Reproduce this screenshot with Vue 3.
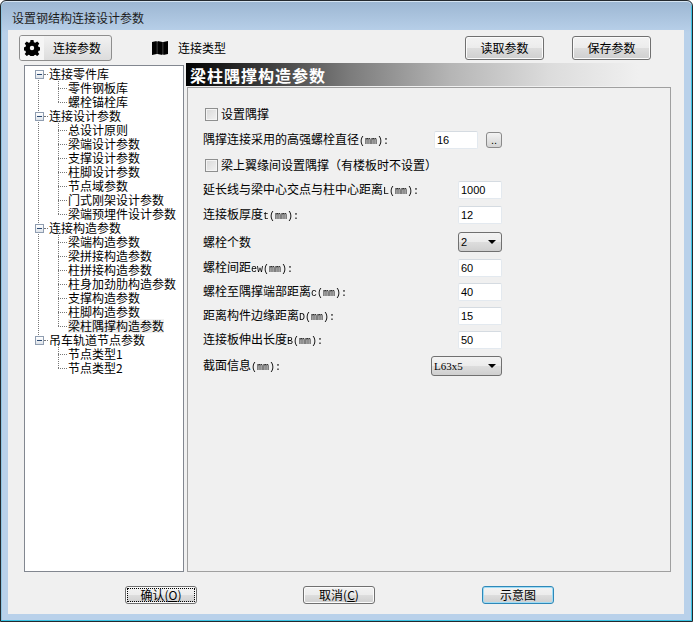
<script setup>
const tree = [
  { label: '连接零件库', items: ['零件钢板库', '螺栓锚栓库'] },
  { label: '连接设计参数', items: ['总设计原则', '梁端设计参数', '支撑设计参数', '柱脚设计参数', '节点域参数', '门式刚架设计参数', '梁端预埋件设计参数'] },
  { label: '连接构造参数', items: ['梁端构造参数', '梁拼接构造参数', '柱拼接构造参数', '柱身加劲肋构造参数', '支撑构造参数', '柱脚构造参数', '梁柱隅撑构造参数'] },
  { label: '吊车轨道节点参数', items: ['节点类型1', '节点类型2'] }
]
const selected = '梁柱隅撑构造参数'

const lowerRows = [
  { label: '连接板厚度', unit: 't(mm):', value: '12', h: 24 },
  { label: '螺栓个数', unit: '', select: '2', h: 30 },
  { label: '螺栓间距', unit: 'ew(mm):', value: '60', h: 22 },
  { label: '螺栓至隅撑端部距离', unit: 'c(mm):', value: '40', h: 26 },
  { label: '距离构件边缘距离', unit: 'D(mm):', value: '15', h: 22 },
  { label: '连接板伸出长度', unit: 'B(mm):', value: '50', h: 26 }
]
</script>

<template>
  <div class="window">
    <div class="titlebar">设置钢结构连接设计参数</div>
    <div class="client">
      <div class="toolbar">
        <div class="tool tool-active">
          <span class="tool-icon">
            <svg width="16" height="16" viewBox="0 0 16 16"><path fill="#000" fill-rule="evenodd" d="M6.500 0h3l.4 2.200 1.500.6 1.800-1.300 2.100 2.100-1.300 1.800.6 1.500 2.200.4v3l-2.200.4-.6 1.500 1.300 1.800-2.100 2.100-1.800-1.300-1.500.6-.4 2.200h-3l-.4-2.200-1.500-.6-1.800 1.300-2.100-2.100 1.300-1.800-.6-1.500-2.200-.4v-3l2.200-.4.6-1.500-1.300-1.800 2.100-2.100 1.800 1.300 1.500-.6zM8 5.800a2.200 2.200 0 1 0 0 4.400 2.200 2.200 0 0 0 0-4.400z"/></svg>
          </span>
          <span>连接参数</span>
        </div>
        <div class="tool tool-plain">
          <span class="tool-icon">
            <svg width="16" height="14" viewBox="0 0 16 14"><path fill="#555" d="M4 1h8v12H4z"/><path fill="#000" d="M0 1 4.700 0v13L0 14zM5.500 0l5 1v13l-5-1zM11.300 1 16 0v13l-4.700 1z"/></svg>
          </span>
          <span>连接类型</span>
        </div>
        <div class="tool-spacer"></div>
        <button class="btn btn-top">读取参数</button>
        <button class="btn btn-top btn-last">保存参数</button>
      </div>

      <div class="main">
        <div class="tree">
          <div v-for="group in tree" :key="group.label" class="group">
            <div class="root-row">
              <span class="expander"></span>
              <span class="root-dash"></span>
              <span>{{ group.label }}</span>
            </div>
            <div class="children">
              <div v-for="item in group.items" :key="item" class="child-row">
                <span class="child-dash"></span>
                <span :class="{ selected: item === selected }" class="child-text">{{ item }}</span>
              </div>
            </div>
          </div>
        </div>

        <div class="panel">
          <div class="heading">梁柱隅撑构造参数</div>
          <div class="form">
            <label class="row check-row h-set">
              <span class="check"></span><span>设置隅撑</span>
            </label>
            <div class="row h-dia">
              <span class="label">隅撑连接采用的高强螺栓直径<span class="unit">(mm):</span></span>
              <span class="input input-dia">16</span>
              <span class="browse">..</span>
            </div>
            <label class="row check-row h-flange">
              <span class="check"></span><span>梁上翼缘间设置隅撑（有楼板时不设置）</span>
            </label>
            <div class="row h-ext">
              <span class="label">延长线与梁中心交点与柱中心距离<span class="unit">L(mm):</span></span>
              <span class="input">1000</span>
            </div>
            <div v-for="r in lowerRows" :key="r.label" class="row" :style="{ height: r.h + 'px' }">
              <span class="label">{{ r.label }}<span class="unit">{{ r.unit }}</span></span>
              <span v-if="r.select" class="select">{{ r.select }}<i class="arrow"></i></span>
              <span v-else class="input">{{ r.value }}</span>
            </div>
            <div class="row h-sec">
              <span class="label">截面信息<span class="unit">(mm):</span></span>
              <span class="select select-wide">L63x5<i class="arrow"></i></span>
            </div>
          </div>
        </div>
      </div>

      <div class="footer">
        <button class="btn btn-foot btn-ok"><span class="focus">确认(<u>O</u>)</span></button>
        <button class="btn btn-foot btn-cancel">取消(<u>C</u>)</button>
        <button class="btn btn-foot btn-default">示意图</button>
      </div>
    </div>
  </div>
</template>

<style scoped>
.window {
  width: 693px;
  height: 622px;
  box-sizing: border-box;
  display: flex;
  flex-direction: column;
  border: 1px solid #24292e;
  border-radius: 6px 6px 0 0;
  background: linear-gradient(180deg, #9cb6d2 0, #b9d1ea 32px);
  box-shadow: inset 0 1px 0 #d5e4f2, inset -1px -1px 0 #3cc3e3, inset 1px 0 0 #8fc4e0;
  padding: 0 8px 7px 7px;
  font-family: "Noto Sans CJK SC", "Liberation Sans", sans-serif;
  font-size: 12px;
  line-height: 14px;
  color: #000;
  overflow: hidden;
}
.titlebar {
  height: 29px;
  flex: none;
  display: flex;
  align-items: center;
  padding: 4px 4px 0;
  box-sizing: border-box;
  color: #1c1c1c;
}
.client {
  flex: 1;
  display: flex;
  flex-direction: column;
  background: #f0f0f0;
  min-height: 0;
}
.toolbar {
  height: 35px;
  flex: none;
  display: flex;
  align-items: flex-start;
  padding: 5px 0 0 11px;
  box-sizing: border-box;
}
.tool {
  display: flex;
  align-items: center;
  height: 26px;
  box-sizing: border-box;
}
.tool-active {
  width: 93px;
  border: 1px solid #8e8e8e;
  border-radius: 3px;
  background: linear-gradient(180deg, #f2f2f2, #dcdcdc);
}
.tool-active .tool-icon {
  width: 24px;
  margin-right: 9px;
  align-self: stretch;
  background: #f5f5f5;
  border-radius: 2px 0 0 2px;
}
.tool-plain {
  margin-left: 38px;
}
.tool-plain .tool-icon {
  width: 22px;
  margin-right: 6px;
  justify-content: flex-start;
}
.tool-plain svg { margin-left: 2px; }
.tool-icon {
  display: flex;
  align-items: center;
  justify-content: center;
}
.tool-spacer { flex: 1; }
.btn {
  font: inherit;
  color: #000;
  box-sizing: border-box;
  border: 1px solid #707070;
  border-radius: 3px;
  background: linear-gradient(180deg, #f3f3f3 0, #ececec 48%, #dddddd 52%, #cfcfcf 100%);
  box-shadow: inset 0 0 0 1px #fbfbfb;
  padding: 0;
  display: flex;
  align-items: center;
  justify-content: center;
}
.btn-top {
  width: 79px;
  height: 24px;
  margin: 1px 0 0 28px;
}
.btn-top:first-of-type { margin-left: 0; }
.btn-last { margin-right: 33px; }
.main {
  flex: 1;
  display: flex;
  min-height: 0;
  padding: 0 13px 0 16px;
  gap: 3px;
}
.tree {
  width: 160px;
  height: 507px;
  box-sizing: border-box;
  flex: none;
  background: #fff;
  border: 1px solid #828790;
  padding: 1px 0 0 10px;
  overflow: hidden;
}
.group { position: relative; }
.group:not(:last-child)::before {
  content: "";
  position: absolute;
  left: 3px;
  top: 10px;
  bottom: -4px;
  border-left: 1px dotted #777;
}
.root-row {
  height: 14px;
  display: flex;
  align-items: center;
  white-space: nowrap;
}
.expander {
  width: 9px;
  height: 9px;
  box-sizing: border-box;
  flex: none;
  border: 1px solid #8f9db0;
  background: linear-gradient(180deg, #fff, #dfe4ea);
  position: relative;
  z-index: 1;
}
.expander::after {
  content: "";
  position: absolute;
  left: 1px;
  top: 3px;
  width: 5px;
  height: 1px;
  background: #2b4a73;
}
.root-dash {
  width: 4px;
  margin: 0 1px 0 0;
  flex: none;
  border-top: 1px dotted #777;
}
.children { position: relative; padding-left: 23px; }
.children::before {
  content: "";
  position: absolute;
  left: 23px;
  top: -4px;
  bottom: 7px;
  border-left: 1px dotted #777;
}
.child-row {
  height: 14px;
  display: flex;
  align-items: center;
  white-space: nowrap;
}
.child-dash {
  width: 9px;
  flex: none;
  border-top: 1px dotted #777;
  margin-right: 1px;
}
.child-text { line-height: 14px; }
.selected { background: #f0f0f0; }
.panel {
  flex: 1;
  min-width: 0;
  display: flex;
  flex-direction: column;
  margin-top: -2px;
}
.heading {
  height: 23px;
  flex: none;
  margin: 0 -13px 0 -1px;
  background: linear-gradient(90deg, #000 0, #7c7c7c 33%, #b5b5b5 53%, #dcdcdc 73%, #f0f0f0 91%);
  color: #fff;
  font-size: 16px;
  font-weight: 700;
  line-height: 25px;
  padding-left: 4px;
  box-sizing: border-box;
  letter-spacing: 1px;
}
.form {
  height: 485px;
  box-sizing: border-box;
  border: 1px solid #a0a0a0;
  background: #f0f0f0;
  padding: 13px 168px 0 15px;
  margin-top: 1px;
}
.row {
  display: flex;
  align-items: center;
  white-space: nowrap;
}
.h-set { height: 26px; }
.h-dia { height: 26px; }
.h-flange { height: 24px; }
.h-ext { height: 26px; }
.h-sec { height: 26px; }
.label { flex: 1; }
.unit {
  display: inline-block;
  will-change: transform;
  font-family: "Liberation Mono", monospace;
  font-size: 10px;
}
.check-row { gap: 3px; padding-left: 2px; }
.check {
  width: 13px;
  height: 13px;
  box-sizing: border-box;
  flex: none;
  border: 1px solid #8e8f8f;
  background: linear-gradient(135deg, #d8d8d8, #f2f2f2);
  box-shadow: inset 0 0 0 1px #f4f4f4;
}
.input {
  width: 44px;
  height: 18px;
  flex: none;
  box-sizing: border-box;
  background: #fff;
  border: 1px solid #e3e9ef;
  border-top-color: #d5dbe1;
  border-radius: 2px;
  padding-left: 2px;
  font-family: "Liberation Sans", sans-serif;
  font-size: 11px;
  line-height: 16px;
}
.input-dia { margin-right: 8px; }
.browse {
  width: 16px;
  height: 16px;
  flex: none;
  box-sizing: border-box;
  border: 1px solid #8a8a8a;
  border-radius: 3px;
  background: linear-gradient(180deg, #f3f3f3, #d4d4d4);
  font-family: "Liberation Sans", sans-serif;
  font-size: 11px;
  line-height: 15px;
  text-align: center;
}
.select {
  width: 44px;
  height: 20px;
  flex: none;
  box-sizing: border-box;
  position: relative;
  border: 1px solid #707070;
  border-radius: 3px;
  background: linear-gradient(180deg, #f3f3f3 0, #ececec 48%, #dddddd 52%, #cfcfcf 100%);
  padding-left: 2px;
  font-family: "Liberation Sans", sans-serif;
  font-size: 11px;
  line-height: 18px;
}
.select-wide {
  width: 71px;
  font-family: "Liberation Serif", serif;
}
.arrow {
  position: absolute;
  right: 5px;
  top: 7px;
  border-left: 4px solid transparent;
  border-right: 4px solid transparent;
  border-top: 4px solid #000;
}
.footer {
  height: 42px;
  flex: none;
  display: flex;
  align-items: flex-start;
  padding: 14px 0 0 117px;
  box-sizing: border-box;
}
.btn-foot {
  width: 72px;
  height: 18px;
}
.btn-cancel { margin-left: 106px; }
.btn-default {
  margin-left: 107px;
  border-color: #2f88b8;
  box-shadow: inset 0 0 0 1px #9fdcf5;
}
.focus {
  width: 66px;
  height: 12px;
  border: 1px dotted #000;
  display: flex;
  align-items: center;
  justify-content: center;
}
u, .btn-foot { text-underline-offset: 1px; }
</style>
<style>
html, body { margin: 0; padding: 0; background: #fff; }
</style>
